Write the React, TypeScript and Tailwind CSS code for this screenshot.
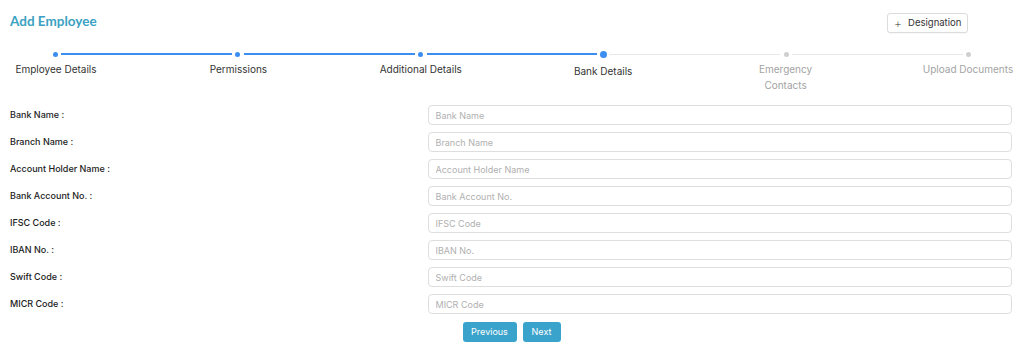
import React from 'react'

const steps = [
  { title: 'Employee Details', state: 'done' },
  { title: 'Permissions', state: 'done' },
  { title: 'Additional Details', state: 'done' },
  { title: 'Bank Details', state: 'current' },
  { title: 'Emergency Contacts', state: 'todo' },
  { title: 'Upload Documents', state: 'todo' },
]

const fields = [
  'Bank Name',
  'Branch Name',
  'Account Holder Name',
  'Bank Account No.',
  'IFSC Code',
  'IBAN No.',
  'Swift Code',
  'MICR Code',
]

const App = () => {
  return (
    <div className="min-h-[357px] bg-white font-['Inter',sans-serif] text-[#222]">
      <div className="flex items-start justify-between pl-[10px] pr-[56px] pt-[12px]">
        <h1 className="font-['Lato',sans-serif] text-[13.5px] font-bold leading-[18px] text-[#3ba1c3]">Add Employee</h1>
        <button className="mt-[1px] flex h-[20px] w-[81px] items-center justify-center gap-[6px] rounded-[3px] border border-[#dcdcdc] bg-white text-[9.5px] text-[#333] shadow-[0_1px_1px_rgba(0,0,0,0.03)]">
          <span className="text-[13px] font-extralight leading-none">+</span>
          <span>Designation</span>
        </button>
      </div>

      <div className="mt-[17px] pl-[10px] pr-[10px]">
        <div className="flex items-center px-[39px]">
          {steps.map((step, i) => (
            <React.Fragment key={step.title}>
              <div className="flex h-[8px] w-[12px] items-center justify-center">
                {step.state === 'current' ? (
                  <span className="h-[7px] w-[7px] rounded-full bg-[#3b8ef0]" />
                ) : step.state === 'done' ? (
                  <span className="h-[5px] w-[5px] rounded-full bg-[#3b8ef0]" />
                ) : (
                  <span className="h-[5px] w-[5px] rounded-full bg-[#cfcfcf]" />
                )}
              </div>
              {i < steps.length - 1 && (
                <div
                  className={
                    steps[i + 1].state === 'todo'
                      ? 'h-[1px] flex-1 bg-[#e8e8e8]'
                      : 'h-[2px] flex-1 bg-[#3b8ef0]'
                  }
                />
              )}
            </React.Fragment>
          ))}
        </div>
        <div className="mt-[3px] flex justify-between">
          {steps.map((step) => (
            <div
              key={step.title}
              className={
                step.state === 'current'
                  ? 'mt-[2px] w-[92px] text-center text-[10px] leading-[16px] text-[#333]'
                  : step.state === 'done'
                  ? 'w-[92px] text-center text-[10px] leading-[16px] text-[#333]'
                  : 'w-[92px] text-center text-[10px] leading-[16px] text-[#a3a3a3]'
              }
            >
              {step.title === 'Emergency Contacts' ? (
                <>
                  Emergency
                  <br />
                  Contacts
                </>
              ) : (
                step.title
              )}
            </div>
          ))}
        </div>
      </div>

      <div className="mt-[12px] flex flex-col gap-[7px] pl-[10px] pr-[12px]">
        {fields.map((f) => (
          <div key={f} className="grid grid-cols-12 items-center">
            <label className="col-span-5 text-[9px] font-medium text-[#222]">{f} :</label>
            <input
              className="col-span-7 h-[20px] rounded-[4px] border border-[#dedede] px-[7px] text-[9px] outline-none placeholder:text-[#b0b0b0]"
              placeholder={f}
            />
          </div>
        ))}
      </div>

      <div className="mt-[8px] flex justify-center gap-[6px] pr-[1px]">
        <button className="h-[20px] w-[54px] rounded-[3px] bg-[#3aa3cc] text-[9px] text-white">Previous</button>
        <button className="h-[20px] w-[38px] rounded-[3px] bg-[#3aa3cc] text-[9px] text-white">Next</button>
      </div>
    </div>
  )
}

export default App
